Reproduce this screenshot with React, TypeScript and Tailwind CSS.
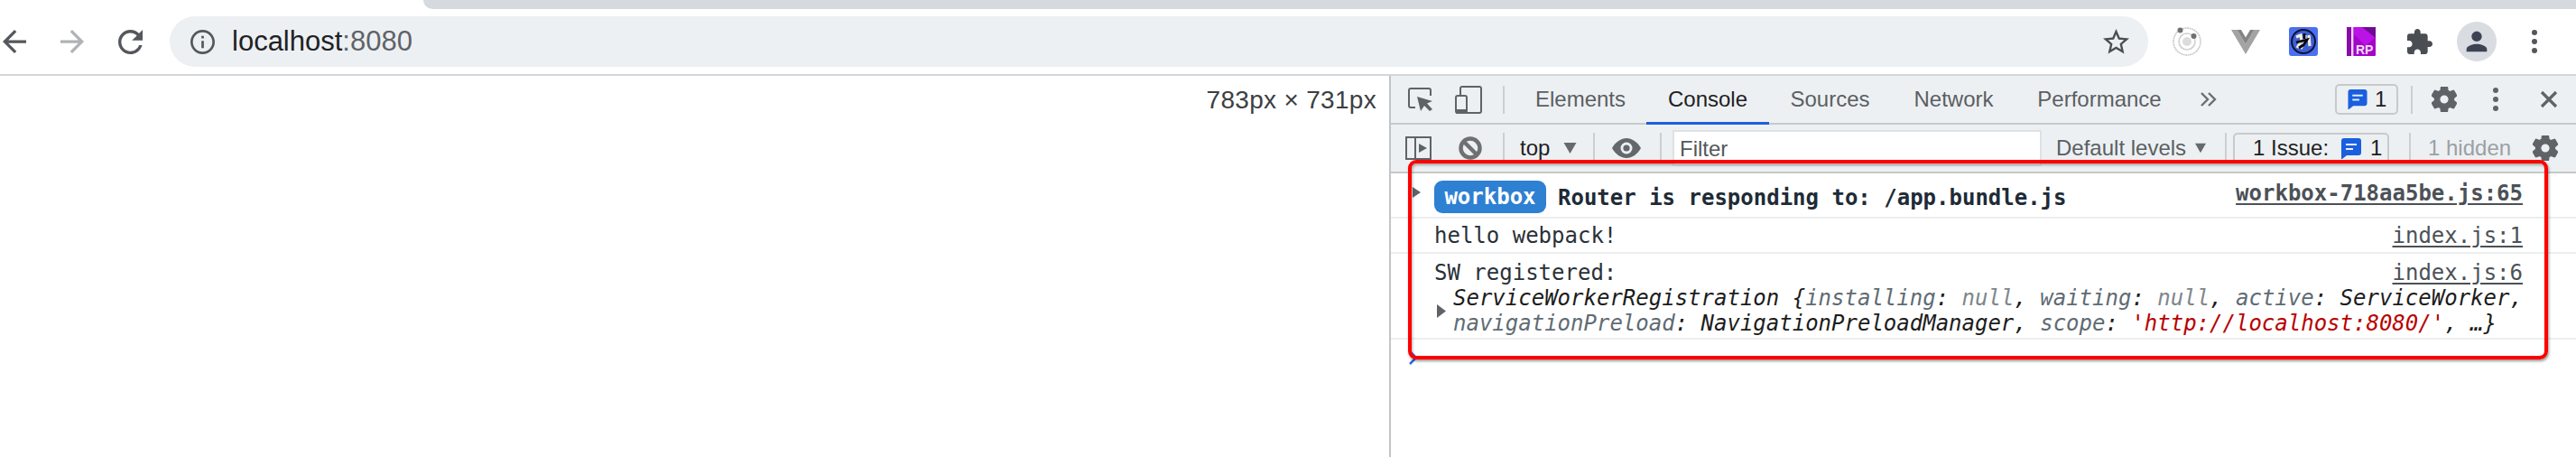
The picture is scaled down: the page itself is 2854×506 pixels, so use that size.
const GEAR = "M19.14 12.94c.04-.3.06-.61.06-.94 0-.32-.02-.64-.07-.94l2.03-1.58c.18-.14.23-.41.12-.61l-1.92-3.32c-.12-.22-.37-.29-.59-.22l-2.39.96c-.5-.38-1.03-.7-1.62-.94l-.36-2.54c-.04-.24-.24-.41-.48-.41h-3.84c-.24 0-.43.17-.47.41l-.36 2.54c-.59.24-1.13.57-1.62.94l-2.39-.96c-.22-.08-.47 0-.59.22L2.74 8.87c-.12.21-.08.47.12.61l2.03 1.58c-.05.3-.09.63-.09.94s.02.64.07.94l-2.03 1.58c-.18.14-.23.41-.12.61l1.92 3.32c.12.22.37.29.59.22l2.39-.96c.5.38 1.03.7 1.62.94l.36 2.54c.05.24.24.41.48.41h3.84c.24 0 .44-.17.47-.41l.36-2.54c.59-.24 1.13-.56 1.62-.94l2.39.96c.22.08.47 0 .59-.22l1.92-3.32c.12-.22.07-.47-.12-.61l-2.01-1.58zM12 15.6c-1.98 0-3.6-1.62-3.6-3.6s1.62-3.6 3.6-3.6 3.6 1.62 3.6 3.6-1.62 3.6-3.6 3.6z";

function Gear({ className }: { className: string }) {
  return (
    <svg viewBox="2.4 2.4 19.2 19.2" className={className}>
      <path d={GEAR} fill="#5f6368" stroke="#5f6368" strokeWidth="0.9" />
    </svg>
  );
}

function Chat({ className }: { className: string }) {
  return (
    <svg viewBox="0 0 22 23" className={className}>
      <path d="M3 0H19a3 3 0 0 1 3 3V16a3 3 0 0 1-3 3H6L1 23H0V3a3 3 0 0 1 3-3z" fill="#1a5fe0" />
      <rect x="5" y="6" width="12" height="2" fill="#e8f0fe" />
      <rect x="5" y="11" width="8" height="2" fill="#e8f0fe" />
    </svg>
  );
}

function Tri({ className }: { className: string }) {
  return (
    <svg viewBox="0 0 14 12" className={className}>
      <path d="M0 0H14L7 12z" fill="#666a6e" />
    </svg>
  );
}

function Sep({ className = "h-[32px]" }: { className?: string }) {
  return <div className={`w-[2px] shrink-0 bg-[#ccced1] ${className}`} />;
}

function BrowserBar() {
  return (
    <div className="flex h-[74px] items-center border-b-2 border-[#d3d6d9] bg-white py-[8px] pl-[3px]">
      <svg viewBox="4 4 16 16" className="h-[26px] w-[26px] shrink-0">
        <path fill="#54575c" d="M20 11H7.83l5.59-5.59L12 4l-8 8 8 8 1.41-1.41L7.83 13H20v-2z" />
      </svg>
      <svg viewBox="4 4 16 16" className="ml-[38px] h-[26px] w-[26px] shrink-0">
        <path fill="#b0b2b5" d="M12 4l-1.41 1.41L16.17 11H4v2h12.17l-5.58 5.59L12 20l8-8z" />
      </svg>
      <svg viewBox="4 4 16 16" className="ml-[38px] h-[27px] w-[27px] shrink-0">
        <path fill="#54575c" d="M17.65 6.35C16.2 4.9 14.21 4 12 4c-4.42 0-7.99 3.58-7.99 8s3.57 8 7.99 8c3.73 0 6.84-2.55 7.73-6h-2.08c-.82 2.33-3.04 4-5.65 4-3.31 0-6-2.69-6-6s2.69-6 6-6c1.66 0 3.14.69 4.22 1.78L13 11h7V4l-2.35 2.35z" />
      </svg>
      <div className="ml-[30px] flex h-[56px] w-[2192px] shrink-0 items-center rounded-[28px] bg-[#edf0f2] pl-[23px] pr-[21px]">
        <svg viewBox="2 2 20 20" className="h-[27px] w-[27px] shrink-0">
          <path fill="#54575c" d="M11 7h2v2h-2zm0 4h2v6h-2zm1-9C6.48 2 2 6.48 2 12s4.48 10 10 10 10-4.48 10-10S17.52 2 12 2zm0 18c-4.41 0-8-3.59-8-8s3.59-8 8-8 8 3.59 8 8-3.59 8-8 8z" />
        </svg>
        <div className="ml-[19px] text-[31px] leading-[36px] text-[#202124]">
          localhost<span className="text-[#5f6368]">:8080</span>
        </div>
        <svg viewBox="2 2 20 20" className="ml-auto h-[29px] w-[29px] shrink-0">
          <path fill="#4a4d52" d="M22 9.24l-7.19-.62L12 2 9.19 8.63 2 9.24l5.46 4.73L5.82 21 12 17.27 18.18 21l-1.63-7.03L22 9.24zM12 15.4l-3.76 2.27 1-4.28-3.32-2.88 4.38-.38L12 6.1l1.71 4.04 4.38.38-3.32 2.88 1 4.28L12 15.4z" />
        </svg>
      </div>
      {/* ionic */}
      <svg viewBox="0 0 32 32" className="ml-[27px] h-[32px] w-[32px] shrink-0">
        <circle cx="16" cy="16" r="15" fill="none" stroke="#c9c9c9" strokeWidth="1.6" strokeDasharray="2 0.6" />
        <circle cx="16" cy="16" r="9" fill="none" stroke="#cfcfcf" strokeWidth="1.6" />
        <circle cx="16" cy="16" r="5" fill="#dcdcdc" />
        <circle cx="8.5" cy="3.5" r="3" fill="#707070" />
        <circle cx="23.5" cy="10" r="3" fill="#707070" />
      </svg>
      {/* vue */}
      <svg viewBox="0 0 32 27" className="ml-[33px] h-[27px] w-[32px] shrink-0">
        <path d="M0 0H6.5L16 16 25.5 0H32L16 27z" fill="#a3a3a3" />
        <path d="M6.5 0H11L16 8.5 21 0H25.5L16 16z" fill="#858585" />
      </svg>
      {/* blue ext */}
      <svg viewBox="0 0 32 32" className="ml-[32px] h-[32px] w-[32px] shrink-0">
        <rect width="32" height="32" rx="3" fill="#4c6ff0" />
        <circle cx="16" cy="16" r="13" fill="#3f5fd8" stroke="#0e1230" strokeWidth="2" />
        <path d="M8 11L13 9 14 15 9 23M18 9V15L13 24M22 9L23 21" fill="none" stroke="#f4f0d8" strokeWidth="3.2" />
        <path d="M8 17L20 14 16 20 11 23M17 7V13" fill="none" stroke="#05060f" strokeWidth="2.8" />
      </svg>
      {/* RP */}
      <svg viewBox="0 0 32 32" className="ml-[32px] h-[32px] w-[32px] shrink-0">
        <rect width="32" height="32" rx="1" fill="#a305c9" />
        <path d="M8 0H32V11L21 21 8 8z" fill="#bb12e6" />
        <path d="M17 0H32V12z" fill="#6f0a96" />
        <rect x="5" width="2.4" height="32" fill="#f0d8f8" />
        <rect y="0" width="5" height="32" fill="#8a0aa8" />
        <text x="10" y="30" fontFamily="'Liberation Sans', sans-serif" fontWeight="700" fontSize="14" fill="#f6dcfb">RP</text>
      </svg>
      {/* puzzle */}
      <svg viewBox="2 1 21 21" className="ml-[35px] h-[28px] w-[28px] shrink-0">
        <path fill="#4a4d52" d="M20.5 11H19V7c0-1.1-.9-2-2-2h-4V3.5C13 2.12 11.88 1 10.5 1S8 2.12 8 3.5V5H4c-1.1 0-1.99.9-1.99 2v3.8H3.5c1.49 0 2.7 1.21 2.7 2.7s-1.21 2.7-2.7 2.7H2V20c0 1.1.9 2 2 2h3.8v-1.5c0-1.49 1.21-2.7 2.7-2.7 1.49 0 2.7 1.21 2.7 2.7V22H17c1.1 0 2-.9 2-2v-4h1.5c1.38 0 2.5-1.12 2.5-2.5S21.88 11 20.5 11z" />
      </svg>
      {/* profile */}
      <div className="ml-[27px] flex h-[44px] w-[44px] shrink-0 items-center justify-center rounded-full bg-[#d9dce1]">
        <svg viewBox="0 0 24 24" className="h-[34px] w-[34px]">
          <path fill="#3c4454" d="M12 12c2.21 0 4-1.79 4-4s-1.79-4-4-4-4 1.79-4 4 1.79 4 4 4zm0 2c-2.67 0-8 1.34-8 4v2h16v-2c0-2.66-5.33-4-8-4z" />
        </svg>
      </div>
      <svg viewBox="0 0 6 26" className="ml-[39px] h-[26px] w-[6px] shrink-0">
        <circle cx="3" cy="3" r="3" fill="#54575c" />
        <circle cx="3" cy="13" r="3" fill="#54575c" />
        <circle cx="3" cy="23" r="3" fill="#54575c" />
      </svg>
    </div>
  );
}

function Tab({ w, label, active }: { w: string; label: string; active?: boolean }) {
  return active ? (
    <div className={`${w} flex h-[54px] shrink-0 items-center justify-center self-start border-b-[3px] border-[#1a5fe0] pt-[1px] text-[#202124]`}>{label}</div>
  ) : (
    <div className={`${w} flex h-[52px] shrink-0 items-center justify-center text-[#5a5f64]`}>{label}</div>
  );
}

function TabRow() {
  return (
    <div className="flex h-[54px] items-center border-b-2 border-[#c6c9cc] bg-[#edf0f2] text-[24px]">
      <svg viewBox="0 0 28 26" className="ml-[19px] h-[26px] w-[28px] shrink-0">
        <path d="M8 22H3a2 2 0 0 1-2-2V3a2 2 0 0 1 2-2H23a2 2 0 0 1 2 2V9" fill="none" stroke="#5f6368" strokeWidth="2" />
        <path d="M10 10L27 15 21 17.5 27 24 24 26 18 20 14 26z" fill="#5f6368" />
      </svg>
      <svg viewBox="0 0 30 31" className="ml-[24px] h-[31px] w-[30px] shrink-0">
        <path d="M6 11V3a2 2 0 0 1 2-2H27a2 2 0 0 1 2 2V28a2 2 0 0 1-2 2H13" fill="none" stroke="#5f6368" strokeWidth="2" />
        <rect x="1" y="11" width="12" height="19" rx="2" fill="none" stroke="#5f6368" strokeWidth="2" />
        <rect x="1" y="26" width="12" height="5" rx="1" fill="#5f6368" />
      </svg>
      <Sep className="ml-[23px] h-[31px]" />
      <div className="ml-[11px] flex h-[52px] items-center">
        <Tab w="w-[146px]" label="Elements" />
        <Tab w="w-[136px]" label="Console" active />
        <Tab w="w-[135px]" label="Sources" />
        <Tab w="w-[139px]" label="Network" />
        <Tab w="w-[184px]" label="Performance" />
      </div>
      <svg viewBox="0 0 18 16" className="ml-[20px] h-[16px] w-[18px] shrink-0">
        <path d="M1 1L8 8 1 15M9 1L16 8 9 15" fill="none" stroke="#6a6e73" strokeWidth="2.4" />
      </svg>
      <div className="ml-[131px] flex h-[34px] w-[70px] shrink-0 items-center rounded-[5px] border-2 border-[#c6cacd] pl-[12px] text-[#202124]">
        <Chat className="h-[22px] w-[22px] shrink-0" />
        <span className="ml-[8px]">1</span>
      </div>
      <Sep className="ml-[14px] h-[31px]" />
      <Gear className="ml-[21px] h-[28px] w-[28px] shrink-0" />
      <svg viewBox="0 0 6 26" className="ml-[40px] h-[26px] w-[6px] shrink-0">
        <circle cx="3" cy="3" r="3" fill="#5f6368" />
        <circle cx="3" cy="13" r="3" fill="#5f6368" />
        <circle cx="3" cy="23" r="3" fill="#5f6368" />
      </svg>
      <svg viewBox="0 0 20 20" className="ml-[46px] h-[20px] w-[20px] shrink-0">
        <path d="M2 2L18 18M18 2L2 18" fill="none" stroke="#5f6368" strokeWidth="3.2" />
      </svg>
    </div>
  );
}

function FilterRow() {
  return (
    <div className="flex h-[54px] items-center border-b-2 border-[#c6c9cc] bg-[#edf0f2] text-[24px]">
      <svg viewBox="0 0 29 26" className="ml-[16px] h-[26px] w-[29px] shrink-0">
        <rect x="1" y="1" width="27" height="24" fill="none" stroke="#5f6368" strokeWidth="2" />
        <rect x="10" y="1" width="2" height="24" fill="#5f6368" />
        <path d="M15 8L24 13 15 18z" fill="#5f6368" />
      </svg>
      <svg viewBox="0 0 26 26" className="ml-[30px] h-[26px] w-[26px] shrink-0">
        <circle cx="13" cy="13" r="10.5" fill="none" stroke="#6e7074" strokeWidth="4.5" />
        <path d="M5.5 5.5L20.5 20.5" stroke="#6e7074" strokeWidth="4.5" />
      </svg>
      <Sep className="ml-[23px] h-[34px]" />
      <span className="ml-[17px] w-[33px] shrink-0 text-[#202124]">top</span>
      <Tri className="ml-[15px] h-[12px] w-[15px] shrink-0" />
      <Sep className="ml-[18px] h-[34px]" />
      <svg viewBox="0 0 32 22" className="ml-[19px] h-[22px] w-[32px] shrink-0">
        <path d="M0 11C4 4 10 0 16 0S28 4 32 11C28 18 22 22 16 22S4 18 0 11z" fill="#64686c" />
        <circle cx="16" cy="11" r="6.5" fill="#edf0f2" />
        <circle cx="16" cy="11" r="3.6" fill="#64686c" />
      </svg>
      <Sep className="ml-[21px] h-[34px]" />
      <div className="ml-[12px] flex h-[40px] w-[409px] shrink-0 items-center border-2 border-[#dfe2e4] bg-white pl-[6px] pt-[1px] text-[#53585c]">Filter</div>
      <span className="ml-[16px] w-[148px] shrink-0 whitespace-nowrap text-[#5a5f64]">Default levels</span>
      <Tri className="ml-[6px] h-[12px] w-[12px] shrink-0" />
      <Sep className="ml-[21px] h-[34px]" />
      <div className="ml-[7px] flex h-[34px] w-[173px] shrink-0 items-center rounded-[5px] border-2 border-[#c6cacd] pl-[20px] text-[#202124]">
        <span className="whitespace-nowrap">1 Issue:</span>
        <Chat className="ml-[14px] h-[23px] w-[22px] shrink-0" />
        <span className="ml-[10px]">1</span>
      </div>
      <Sep className="ml-[22px] h-[34px]" />
      <span className="ml-[19px] w-[92px] shrink-0 whitespace-nowrap text-[#9aa0a6]">1 hidden</span>
      <Gear className="ml-[24px] h-[28px] w-[28px] shrink-0" />
    </div>
  );
}

function Link({ children, bold }: { children: string; bold?: boolean }) {
  return <span className={`underline underline-offset-[3px] text-[#4c5157] ${bold ? "font-bold" : ""}`}>{children}</span>;
}

function Console() {
  const key = "text-[#5f6b73]";
  const nul = "text-[#80868b]";
  return (
    <div className="text-[24px] text-[#2a3138] [font-family:'DejaVu_Sans_Mono',monospace]">
      <div className="flex h-[50px] border-b-2 border-[#eceef0] pl-[24px] pr-[59px]">
        <svg viewBox="0 0 9 12" className="mt-[15px] h-[12px] w-[9px] shrink-0">
          <path d="M0 0L9 6 0 12z" fill="#5f6368" />
        </svg>
        <div className="ml-[15px] mt-[8px] flex h-[36px] w-[124px] shrink-0 items-center justify-center rounded-[9px] bg-[#2d80d2] font-bold leading-none text-white">workbox</div>
        <div className="ml-[13px] mt-[11px] font-bold leading-[32px] text-[#202b36]">Router is responding to: /app.bundle.js</div>
        <div className="ml-auto mt-[6px] leading-[32px]"><Link bold>workbox-718aa5be.js:65</Link></div>
      </div>
      <div className="flex h-[39px] items-center justify-between border-b-2 border-[#eceef0] pl-[48px] pr-[59px] pt-[1px] leading-[28px]">
        <span>hello webpack!</span>
        <Link>index.js:1</Link>
      </div>
      <div className="h-[95px] border-b-2 border-[#eceef0] pl-[48px] pr-[59px] pt-[7px] leading-[28px]">
        <div className="flex justify-between">
          <span>SW registered:</span>
          <Link>index.js:6</Link>
        </div>
        <div className="flex items-center">
          <svg viewBox="0 0 10 15" className="ml-[3px] h-[15px] w-[10px] shrink-0">
            <path d="M0 0L10 7.5 0 15z" fill="#5f6368" />
          </svg>
          <div className="ml-[8px] whitespace-nowrap italic text-[#1c1c1c]">
            <div>
              ServiceWorkerRegistration {"{"}<span className={key}>installing</span>: <span className={nul}>null</span>, <span className={key}>waiting</span>: <span className={nul}>null</span>, <span className={key}>active</span>: ServiceWorker,
            </div>
            <div>
              <span className={key}>navigationPreload</span>: NavigationPreloadManager, <span className={key}>scope</span>: <span className="text-[#b80000]">'http://localhost:8080/'</span>, …{"}"}
            </div>
          </div>
        </div>
      </div>
      <div className="pl-[19px] pt-[12px]">
        <svg viewBox="0 0 10 16" className="h-[16px] w-[10px]">
          <path d="M2 1L9 8 2 15" fill="none" stroke="#2a6ae0" strokeWidth="2.6" />
        </svg>
      </div>
    </div>
  );
}

export default function App() {
  return (
    <div className="relative flex h-[506px] w-[2854px] flex-col overflow-hidden bg-white [font-family:'Liberation_Sans',Arial,sans-serif]">
      <div className="flex h-[10px] pl-[469px]">
        <div className="flex-1 rounded-bl-[10px] bg-[#d6d9dd]" />
      </div>
      <BrowserBar />
      <div className="flex flex-1">
        <div className="w-[1539px] shrink-0 pr-[14px] pt-[11px] text-right text-[28px] leading-[32px] tracking-[0.3px] text-[#3c3f43]">783px × 731px</div>
        <div className="flex-1 border-l-2 border-[#c2c5c8]">
          <TabRow />
          <FilterRow />
          <Console />
        </div>
      </div>
      <div className="pointer-events-none absolute left-[1560px] top-[177px] h-[221px] w-[1263px] rounded-[9px] border-4 border-[#fe0000] shadow-[1px_2px_3px_rgba(0,0,0,0.4),inset_1px_2px_3px_rgba(0,0,0,0.3)]" />
    </div>
  );
}
